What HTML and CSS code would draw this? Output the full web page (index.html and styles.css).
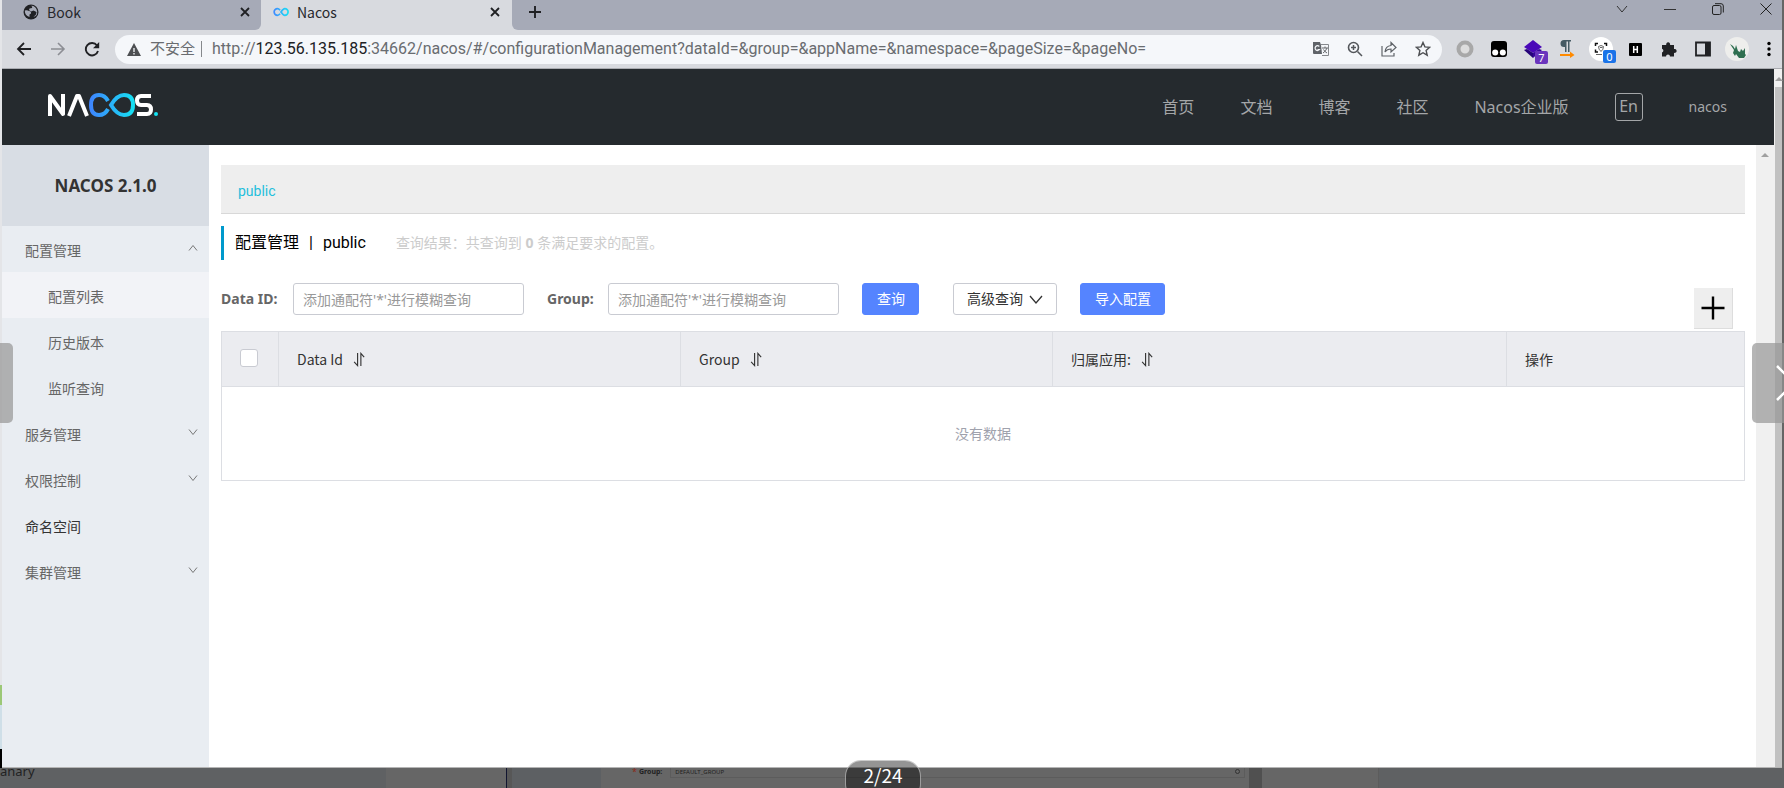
FILE: index.html
```html
<!DOCTYPE html>
<html lang="zh-CN">
<head>
<meta charset="utf-8">
<title>Nacos</title>
<link rel="stylesheet" href="styles.css">
</head>
<body>
<div class="viewer">
  <div class="window">
    <div class="tabstrip">
      <div class="tab">
        <svg class="tab-icon" viewBox="0 0 16 16"><circle cx="8" cy="8" r="7.500" fill="#202124"/><path d="M1.800 6.500q2.700-.5 4.200.5 2.500.5 2 2.500l-1.500 1v2.500q-4.700-1.500-4.700-6.500zM8 1.800q2 .7 1 2.200l-2.500.5-.5 1.500 2 1.500 2.500-1 3 1.500-.5 2.500-2.500 2.500q4-1 3.700-5.500-1-5.700-6.200-5.700z" fill="#a6aab7"/></svg>
        <span class="tab-title">Book</span>
        <button class="icon-btn" aria-label="关闭"><svg width="10" height="10" viewBox="0 0 10 10"><path d="M1 1l8 8M9 1L1 9" stroke="#202124" stroke-width="1.800"/></svg></button>
      </div>
      <div class="tab tab-active">
        <svg class="tab-icon" viewBox="0 0 18 10"><defs><linearGradient id="g1"><stop offset="0" stop-color="#3f8cff"/><stop offset="1" stop-color="#19dff5"/></linearGradient></defs><path d="M8 3Q6.500 1.300 5 1.300a3.700 3.700 0 0 0 0 7.400Q6.500 8.700 8 7M9 5q2.500-3.700 4.300-3.700a3.700 3.700 0 0 1 0 7.400Q11.500 8.700 9 5z" fill="none" stroke="url(#g1)" stroke-width="1.900"/></svg>
        <span class="tab-title">Nacos</span>
        <button class="icon-btn" aria-label="关闭"><svg width="10" height="10" viewBox="0 0 10 10"><path d="M1 1l8 8M9 1L1 9" stroke="#202124" stroke-width="1.800"/></svg></button>
      </div>
      <button class="icon-btn new-tab" aria-label="新标签页"><svg width="14" height="14" viewBox="0 0 14 14"><path d="M7 1v12M1 7h12" stroke="#202124" stroke-width="1.900"/></svg></button>
      <div class="win-controls">
        <button class="icon-btn" aria-label="搜索标签页"><svg width="12" height="12" viewBox="0 0 12 12"><path d="M1 3l5 6 5-6" fill="none" stroke="#333" stroke-width="1"/></svg></button>
        <button class="icon-btn" aria-label="最小化"><svg width="12" height="12" viewBox="0 0 12 12"><path d="M0 6.500h12" stroke="#333"/></svg></button>
        <button class="icon-btn" aria-label="还原"><svg width="12" height="12" viewBox="0 0 12 12"><rect x=".5" y="2.500" width="8.500" height="9" rx="1.500" fill="none" stroke="#222"/><path d="M3 .7h6q2.300 0 2.300 2.300v6.500" fill="none" stroke="#222"/></svg></button>
        <button class="icon-btn" aria-label="关闭窗口"><svg width="12" height="12" viewBox="0 0 12 12"><path d="M.5.500l11 11M11.500.500l-11 11" stroke="#222"/></svg></button>
      </div>
    </div>

    <div class="toolbar">
      <div class="nav-btns">
        <button class="icon-btn" aria-label="后退"><svg width="16" height="16" viewBox="0 0 16 16"><path d="M15 8H2M8 2L2 8l6 6" fill="none" stroke="#202124" stroke-width="1.800"/></svg></button>
        <button class="icon-btn" aria-label="前进"><svg width="16" height="16" viewBox="0 0 16 16"><path d="M1 8h13M8 2l6 6-6 6" fill="none" stroke="#8c8e94" stroke-width="1.600"/></svg></button>
        <button class="icon-btn" aria-label="刷新"><svg width="16" height="16" viewBox="0 0 16 16"><path d="M13 4.500A6.200 6.200 0 1 0 14 10" fill="none" stroke="#202124" stroke-width="1.900"/><path d="M15.200 1v6.300H9z" fill="#202124"/></svg></button>
      </div>
      <div class="omnibox">
        <svg width="14" height="13" viewBox="0 0 14 13"><path d="M7 0l7 13H0z" fill="#4d4f52"/><path d="M7 5v4M7 10v1.500" stroke="#f5f7fa" stroke-width="1.300"/></svg>
        <span class="insecure">不安全</span>
        <span class="url">http://<span class="host">123.56.135.185</span>:34662/nacos/#/configurationManagement?dataId=&amp;group=&amp;appName=&amp;namespace=&amp;pageSize=&amp;pageNo=</span>
        <div class="omni-icons">
          <button class="icon-btn" aria-label="翻译"><svg width="16" height="16" viewBox="0 0 16 16"><path d="M0 1h7l1 3 1 9H1q-1 0-1-1z" fill="#5f6368"/><path d="M8 3.500h7.500v11H9" fill="none" stroke="#85888c"/><path d="M6.300 5.500a2.400 2.400 0 1 0 .2 3H4.500" fill="none" stroke="#f5f7fa" stroke-width="1.200"/><path d="M9 7h6M12 5.500V7M14 7q-1 3-4 5M10.500 8.500q1 2 3.500 3.500" fill="none" stroke="#66696d"/></svg></button>
          <button class="icon-btn" aria-label="缩放"><svg width="16" height="16" viewBox="0 0 16 16"><circle cx="6.500" cy="6.500" r="5" fill="none" stroke="#54575b" stroke-width="1.600"/><path d="M10.500 10.500l4.500 4.500M4 6.500h5M6.500 4v5" stroke="#54575b" stroke-width="1.500"/></svg></button>
          <button class="icon-btn" aria-label="分享"><svg width="16" height="16" viewBox="0 0 16 16"><path d="M1 5v10h12v-3M4 11q.5-6 6-6.500V1.500L15 6.500l-5 4.500V8Q6 8 4 11z" fill="none" stroke="#5f6368" stroke-width="1.200"/></svg></button>
          <button class="icon-btn" aria-label="收藏"><svg width="16" height="16" viewBox="0 0 16 16"><path d="M8 1.500l1.900 4.400 4.800.4-3.600 3.200 1.100 4.700L8 11.700l-4.200 2.500 1.100-4.700L1.300 6.300l4.800-.4z" fill="none" stroke="#4d4f52" stroke-width="1.400"/></svg></button>
        </div>
      </div>
      <div class="extensions">
        <button class="icon-btn ext" aria-label="扩展 1"><svg width="18" height="18" viewBox="0 0 18 18"><circle cx="9" cy="9" r="6.500" fill="#ddd" stroke="#a8a8a8" stroke-width="4"/></svg></button>
        <button class="icon-btn ext" aria-label="扩展 2"><svg width="16" height="16" viewBox="0 0 16 16"><rect width="16" height="16" rx="3" fill="#000"/><circle cx="4.200" cy="11.500" r="3" fill="#fff"/><circle cx="11.800" cy="11.500" r="3" fill="#fff"/></svg></button>
        <button class="icon-btn ext" aria-label="扩展 3"><svg width="18" height="18" viewBox="0 0 18 18"><path d="M9 0l9 7-9 6-9-6z" fill="#4a08b8"/><path d="M0 10l3-1 6 4v5z" fill="#25037a"/><path d="M9 13l6-4 3 1-9 8z" fill="#35059a"/></svg><span class="badge badge-purple">7</span></button>
        <button class="icon-btn ext" aria-label="扩展 4"><svg width="16" height="18" viewBox="0 0 16 18"><path d="M12 0H5a3.500 3.500 0 0 0 0 7h1v5h1.500V1.500H9V12h1.500V1.500H12z" fill="#455a64"/><path d="M1 14h10v-2.500l4.500 3.500-4.500 3V16H1z" fill="#ff8a00"/></svg></button>
        <button class="icon-btn ext ext-round" aria-label="扩展 5"><svg width="14" height="14" viewBox="0 0 14 14"><path d="M1.500 4V1.500H4M10 1.500h2.500V4M1.500 7.500V10H4" fill="none" stroke="#111" stroke-width="1.500"/><path d="M4.500 4.500q2.500-2 5 0 0 3-2.500 5-2.500-2-2.500-5zM6 5.500h2.500M2 12.500h6" fill="none" stroke="#666"/></svg><span class="badge badge-blue">0</span></button>
        <button class="icon-btn ext" aria-label="扩展 6"><svg width="13" height="13" viewBox="0 0 13 13"><rect width="13" height="13" rx="1" fill="#000"/><path d="M4.700 3v7M8.300 3v7M4.700 6.500h3.600" stroke="#fff" stroke-width="1.500"/></svg></button>
        <button class="icon-btn ext" aria-label="扩展程序"><svg width="16" height="16" viewBox="0 0 16 16"><path d="M1 4h4.300a2 2 0 1 1 3.700 0H13v4a2 2 0 1 1 0 3.800V15.500H9a2 2 0 0 0-4 0H1v-4a2 2 0 0 0 0-3.800z" fill="#202124"/></svg></button>
        <button class="icon-btn ext" aria-label="侧边栏"><svg width="16" height="16" viewBox="0 0 16 16"><path d="M1 1.500h14v13H1z" fill="none" stroke="#202124" stroke-width="1.800"/><path d="M10 1.500h5v13h-5z" fill="#202124"/></svg></button>
        <button class="icon-btn ext avatar" aria-label="用户"><svg width="22" height="22" viewBox="0 0 22 22"><path d="M4 6l3 2 2 3 1-4 2 6 2 1 1-3 2 2 2-3v6l1 1-2 3h-5l-3-4-1 2-2-3 1-3z" fill="#2f6f50"/></svg></button>
        <button class="icon-btn ext" aria-label="菜单"><svg width="4" height="16" viewBox="0 0 4 16"><circle cx="2" cy="2.500" r="1.700"/><circle cx="2" cy="8" r="1.700"/><circle cx="2" cy="13.500" r="1.700"/></svg></button>
      </div>
    </div>

    <div class="page">
      <div class="app">
        <header class="header">
          <svg class="logo" viewBox="0 1 111 24" role="img" aria-label="NACOS"><defs><linearGradient id="g2" gradientUnits="userSpaceOnUse" x1="42" y1="0" x2="88" y2="0"><stop offset="0" stop-color="#3f83ff"/><stop offset="1" stop-color="#14e3f2"/></linearGradient></defs>
            <g fill="none" stroke="#fff" stroke-width="4" stroke-linejoin="round"><path d="M3 24V4L16 22V2"/><path d="M22 24L30 4h2L40 24"/><path d="M104 4H94q-4 0-4 4.500T94 13h6q4 0 4 4.500T100 22H90"/></g>
            <path d="M61 9q-3-6-9-6-8 0-8 10t8 10q6 0 9-6M64 13q6-10 13-10 9 0 9 10t-9 10q-7 0-13-10z" fill="none" stroke="url(#g2)" stroke-width="4"/><circle cx="109" cy="22" r="2" fill="#14e3f2"/></svg>
          <nav class="topnav">
            <a href="#">首页</a><a href="#">文档</a><a href="#">博客</a><a href="#">社区</a><a href="#">Nacos企业版</a>
            <button class="lang">En</button>
            <a href="#" class="user">nacos</a>
          </nav>
        </header>
        <div class="body">
          <aside class="sidebar">
            <h1 class="version">NACOS 2.1.0</h1>
            <nav class="menu">
              <a href="#">配置管理<svg class="chev" viewBox="0 0 10 6"><path d="M1 5.500l4-5 4 5"/></svg></a>
              <a href="#" class="sub selected">配置列表</a>
              <a href="#" class="sub">历史版本</a>
              <a href="#" class="sub">监听查询</a>
              <a href="#">服务管理<svg class="chev" viewBox="0 0 10 6"><path d="M1 .500l4 5 4-5"/></svg></a>
              <a href="#">权限控制<svg class="chev" viewBox="0 0 10 6"><path d="M1 .500l4 5 4-5"/></svg></a>
              <a href="#" class="leaf">命名空间</a>
              <a href="#">集群管理<svg class="chev" viewBox="0 0 10 6"><path d="M1 .500l4 5 4-5"/></svg></a>
            </nav>
          </aside>
          <main class="main">
            <div class="namespaces"><a href="#">public</a></div>
            <div class="heading">
              <h2><span>配置管理</span><span>|</span><span>public</span></h2>
              <p>查询结果：共查询到 <strong>0</strong> 条满足要求的配置。</p>
            </div>
            <form class="filters">
              <label for="dataid">Data ID:</label>
              <input id="dataid" type="text" placeholder="添加通配符'*'进行模糊查询">
              <label for="group" class="group-label">Group:</label>
              <input id="group" type="text" placeholder="添加通配符'*'进行模糊查询">
              <button type="button" class="btn primary">查询</button>
              <button type="button" class="btn advanced">高级查询<svg width="14" height="9" viewBox="0 0 14 9"><path d="M1 1l6 7 6-7" fill="none" stroke="#333" stroke-width="1.300"/></svg></button>
              <button type="button" class="btn primary">导入配置</button>
              <button type="button" class="add" aria-label="新建配置"><svg width="24" height="24" viewBox="0 0 24 24"><path d="M12 .500v23M.500 12h23" stroke="#000" stroke-width="2.400"/></svg></button>
            </form>
            <table class="grid">
              <colgroup><col class="c1"><col class="c2"><col class="c3"><col class="c4"><col class="c5"></colgroup>
              <thead><tr>
                <th><input type="checkbox" aria-label="全选"></th>
                <th>Data Id<svg class="sort" viewBox="0 0 12 16"><path d="M4.500 1v13.500L.8 10.500M8 15V1.500L11.500 5.500"/></svg></th>
                <th>Group<svg class="sort" viewBox="0 0 12 16"><path d="M4.500 1v13.500L.8 10.500M8 15V1.500L11.500 5.500"/></svg></th>
                <th>归属应用:<svg class="sort" viewBox="0 0 12 16"><path d="M4.500 1v13.500L.8 10.500M8 15V1.500L11.500 5.500"/></svg></th>
                <th>操作</th>
              </tr></thead>
              <tbody><tr><td colspan="5">没有数据</td></tr></tbody>
            </table>
          </main>
          <div class="inner-scroll"><span class="up"></span></div>
        </div>
      </div>
      <div class="outer-scroll"><span class="up"></span><span class="thumb"></span></div>
    </div>
  </div>

  <div class="backdrop">
    <div class="bg-a"><span>anary</span></div>
    <div class="bg-b"></div>
    <div class="bg-c"></div>
    <div class="bg-d"><span class="star">*</span><b>Group:</b><span class="field"><span>DEFAULT_GROUP</span><i></i></span></div>
    <div class="bg-e"></div>
    <div class="bg-b bg-f"></div>
    <div class="bg-g"></div>
  </div>

  <div class="edge-left"></div>
  <button class="pager pager-prev" aria-label="上一张"></button>
  <button class="pager pager-next" aria-label="下一张"><svg width="40" height="40" viewBox="0 0 40 40"><path d="M2 3l17 17L2 37" fill="none" stroke="#fff" stroke-width="2.500"/></svg></button>
  <div class="counter">2/24</div>
</div>
</body>
</html>
```
FILE: styles.css
```css
* { box-sizing: border-box; }
body {
  margin: 0;
  font: 14px/20px "Noto Sans", "Noto Sans CJK SC", sans-serif;
  color: #333;
  overflow: hidden;
}
a { color: inherit; text-decoration: none; }
button, input { font: inherit; color: inherit; }
button { cursor: pointer; }
h1, h2, p { margin: 0; }
svg { display: block; flex: none; }

.viewer {
  position: relative;
  display: flex;
  flex-direction: column;
  height: 100vh;
  overflow: hidden;
  background: #656565;
}
.window {
  flex: 1;
  display: flex;
  flex-direction: column;
  min-height: 0;
  margin: 0 2px;
  background: #fff;
  border-bottom: 1px solid #b5b5b5;
}
.icon-btn {
  display: flex;
  align-items: center;
  justify-content: center;
  padding: 0;
  border: 0;
  background: none;
}

/* Browser tabs */
.tabstrip {
  display: flex;
  height: 30px;
  background: #d8dadf;
  font-family: "Noto Sans CJK SC", sans-serif;
}
.tab {
  display: flex;
  align-items: center;
  width: 259px;
  padding: 0 11px 6px 21px;
  gap: 8px;
  background: #a6aab7;
  border-radius: 0 0 6px 0;
}
.tab-active {
  width: 251px;
  padding: 0 12px 6px 12px;
  background: #d8dadf;
}
.tab-icon { width: 16px; height: 16px; }
.tab-title { flex: 1; color: #26282c; }
.new-tab {
  width: 46px;
  padding-bottom: 6px;
  background: #a6aab7;
  border-radius: 0 0 0 6px;
}
.win-controls {
  flex: 1;
  display: flex;
  justify-content: flex-end;
  gap: 36px;
  padding: 0 10px 12px 0;
  background: #a6aab7;
}

/* Browser toolbar */
.toolbar {
  display: flex;
  align-items: center;
  height: 39px;
  background: #d8dadf;
  border-bottom: 1px solid #aaacb1;
}
.nav-btns { display: flex; gap: 18px; padding: 0 15px 0 14px; }
.omnibox {
  flex: 1;
  display: flex;
  align-items: center;
  height: 29px;
  min-width: 0;
  padding: 0 11px 0 12px;
  border-radius: 15px;
  background: #f5f7fa;
  color: #696c70;
  font-family: Roboto, "Noto Sans CJK SC", sans-serif;
}
.insecure {
  margin-left: 9px;
  padding-right: 6px;
  font-size: 15px;
  line-height: 16px;
  border-right: 1px solid #85888c;
}
.url { margin-left: 10px; font-size: 16px; white-space: nowrap; }
.host { color: #202124; }
.omni-icons { display: flex; gap: 18px; margin-left: auto; }
.extensions { display: flex; align-items: center; gap: 10px; padding: 0 4px 0 11px; }
.ext { position: relative; width: 24px; height: 26px; }
.ext:last-child { width: 19px; }
.ext-round, .avatar { border-radius: 50%; background: #fff; height: 24px; }
.avatar { background: #eeeeec; }
.badge {
  position: absolute;
  right: -3px;
  bottom: -2px;
  width: 13px;
  border-radius: 2px;
  color: #fff;
  font-size: 11px;
  line-height: 13px;
  text-align: center;
}
.badge-purple { background: #6a35bd; }
.badge-blue { background: #1a73e8; }

/* Console header */
.page { flex: 1; display: flex; min-height: 0; }
.app { flex: 1; display: flex; flex-direction: column; min-width: 0; }
.header {
  display: flex;
  align-items: center;
  justify-content: space-between;
  height: 76px;
  padding: 0 47px 0 45px;
  background: #252a2e;
}
.logo { width: 111px; height: 24px; margin-bottom: 4px; }
.topnav {
  display: flex;
  align-items: center;
  gap: 46px;
  color: #a4a6a8;
  font-size: 16px;
}
.lang {
  width: 28px;
  height: 28px;
  padding: 0 0 2px;
  border: 1px solid #a4a6a8;
  border-radius: 3px;
  background: none;
}
.user { font-size: 14px; }

/* Sidebar */
.body { flex: 1; display: flex; min-height: 0; }
.sidebar { width: 207px; background: #e9edf2; }
.version {
  height: 81px;
  background: #d8dde4;
  font-size: 17px;
  line-height: 82px;
  text-align: center;
}
.menu a {
  display: flex;
  align-items: center;
  justify-content: space-between;
  height: 46px;
  padding: 4px 11px 0 23px;
  color: #666;
}
.menu .sub { padding-left: 46px; }
.menu .selected { background: #f2f3f7; }
.menu .leaf { color: #333; }
.chev { width: 10px; height: 6px; margin-bottom: 6px; }
.chev path { fill: none; stroke: #777; }

/* Content */
.main { flex: 1; min-width: 0; padding: 20px 11px 0 12px; }
.namespaces {
  height: 49px;
  padding: 5px 17px 0;
  border-bottom: 1px solid #d8d8d8;
  background: #eee;
  color: #1fbfdc;
  font-family: Roboto, sans-serif;
  line-height: 42px;
}
.heading {
  display: flex;
  align-items: center;
  gap: 30px;
  height: 34px;
  margin-top: 12px;
  padding-left: 11px;
  border-left: 3px solid #09c;
}
.heading h2 {
  display: flex;
  gap: 10px;
  color: #000;
  font-family: Roboto, "Noto Sans CJK SC", sans-serif;
  font-size: 16px;
  font-weight: 400;
}
.heading p { color: #ccc; }
.filters { display: flex; align-items: center; margin-top: 23px; height: 32px; }
.filters label { width: 72px; color: #666; font-weight: 700; }
.filters .group-label { width: 61px; margin-left: 23px; }
.filters input {
  width: 231px;
  height: 32px;
  padding: 0 9px;
  border: 1px solid #c9cbd2;
  border-radius: 3px;
  background: #fff;
}
.filters input::placeholder { color: #999; }
.btn {
  display: flex;
  align-items: center;
  gap: 6px;
  height: 32px;
  margin-left: 23px;
  padding: 0 14px;
  border: 1px solid #c9cbd2;
  border-radius: 3px;
  background: #fff;
}
.primary { padding: 0 13px 0 14px; border-color: #5584ff; background: #5584ff; color: #fff; }
.advanced { margin-left: 34px; padding: 0 13px; }
.add {
  display: flex;
  align-items: center;
  justify-content: center;
  align-self: flex-start;
  width: 39px;
  height: 41px;
  margin: 5px 12px 0 auto;
  padding: 0;
  border: 1px solid #ddd;
  border-width: 0 1px 1px 0;
  background: #eee;
}

.grid {
  width: 100%;
  margin-top: 16px;
  border: 1px solid #dcdee3;
  border-collapse: collapse;
  table-layout: fixed;
}
.grid th {
  height: 55px;
  padding: 0 18px;
  border: 1px solid #dcdee3;
  background: #ebecf0;
  font-family: "Noto Sans CJK SC", sans-serif;
  font-weight: 400;
  text-align: left;
}
.grid td { height: 94px; padding: 0; color: #a0a2ad; text-align: center; }
.c1 { width: 57px; }
.c2 { width: 402px; }
.c3 { width: 372px; }
.c4 { width: 454px; }
.grid input {
  display: block;
  width: 18px;
  height: 18px;
  margin: 0 0 3px;
  appearance: none;
  border: 1px solid #c9cbd2;
  border-radius: 3px;
  background: #fff;
}
.sort { display: inline-block; width: 12px; height: 15px; margin-left: 10px; vertical-align: -2px; }
.sort path { fill: none; stroke: #333; stroke-width: 1.2; }

/* Scrollbars */
.inner-scroll { width: 18px; padding-top: 8px; background: #f0f0f0; }
.up {
  display: block;
  width: 8px;
  height: 4px;
  margin: 0 auto;
  background: #a0a0a0;
  clip-path: polygon(50% 0, 100% 100%, 0 100%);
}
.outer-scroll { display: flex; flex-direction: column; width: 8px; padding: 8px 0 0 1px; background: #f0f0f0; }
.thumb { flex: 1; margin-top: 6px; background: #c1c1c1; }

/* Dimmed page under the viewer */
.backdrop {
  display: grid;
  grid-template-columns: 386fr 121fr 94fr 648fr 13fr 117fr 405fr;
  height: 20px;
  overflow: hidden;
  color: #222;
  font-size: 9px;
  line-height: 12px;
}
.bg-a { background: #5f6163; font-size: 13px; line-height: 6px; }
.bg-b { border-right: 1px solid #111530; background: #666; }
.bg-c { border-left: 5px solid #575757; background: #5d6063; }
.bg-d { display: flex; gap: 2px; padding-left: 31px; background: #666; line-height: 8px; }
.bg-d b { margin-right: 6px; font-size: 7px; }
.star { color: #8c2a18; }
.field { display: flex; justify-content: space-between; width: 575px; height: 10px; padding: 0 4px; border: 1px solid #5c5c5c; border-top: 0; font-size: 6px; line-height: 8px; }
.field i { width: 5px; height: 5px; margin-top: 1px; border: 1px solid #333; border-radius: 50%; }
.bg-e { background: #505050; }
.bg-f { border-color: #5c5c5c; }
.bg-g { background: #5f6163; }

/* Viewer overlays */
.edge-left {
  position: absolute;
  left: 0;
  top: 0;
  width: 2px;
  height: 768px;
  background: linear-gradient(#e4e5e8 685px, #9cc877 685px, #9cc877 705px, #cfdfe8 705px, #cfdfe8 749px, #000 749px);
}
.pager {
  position: absolute;
  top: 343px;
  height: 80px;
  padding: 0;
  border: 0;
  background: rgba(150, 150, 150, .7);
  overflow: hidden;
}
.pager-prev { left: 0; width: 13px; border-radius: 0 5px 5px 0; }
.pager-next { right: 0; width: 32px; padding-left: 23px; border-radius: 5px 0 0 5px; }
.counter {
  position: absolute;
  left: 50%;
  top: 760px;
  width: 76px;
  height: 40px;
  margin-left: -47px;
  border: 1px solid rgba(255, 255, 255, .5);
  border-radius: 16px;
  background: rgba(0, 0, 0, .42);
  color: #fff;
  font-family: "Noto Sans CJK SC", sans-serif;
  font-size: 19px;
  line-height: 28px;
  text-align: center;
}
```
